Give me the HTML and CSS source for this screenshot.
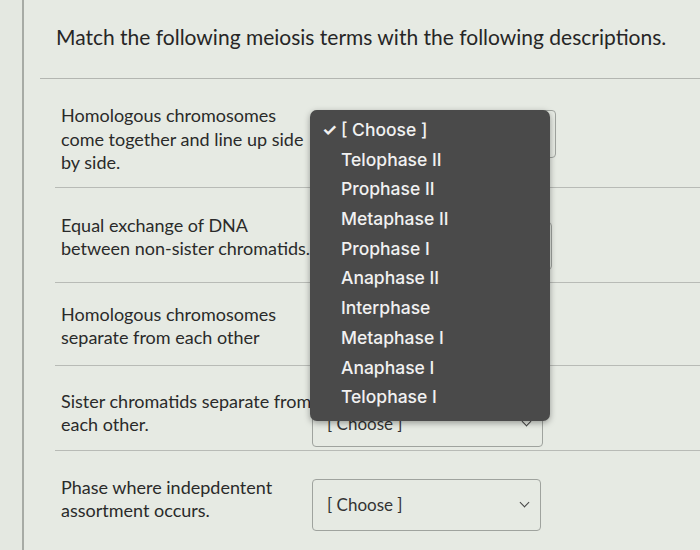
FILE: index.html
```html
<!DOCTYPE html>
<html lang="en">
<head>
<meta charset="utf-8">
<title>Matching question</title>
<link rel="stylesheet" href="styles.css">
</head>
<body>
<div class="card">
  <h1 class="title">Match the following meiosis terms with the following descriptions.</h1>
  <div class="rows">
    <div class="row">
      <div class="desc">Homologous chromosomes<br>come together and line up side<br>by side.</div>
      <div class="select"><span class="sel-text">[ Choose ]</span><span class="chev"></span></div>
    </div>
    <div class="row">
      <div class="desc">Equal exchange of DNA<br>between non-sister chromatids.</div>
      <div class="select"><span class="sel-text">[ Choose ]</span><span class="chev"></span></div>
    </div>
    <div class="row">
      <div class="desc">Homologous chromosomes<br>separate from each other</div>
      <div class="select"><span class="sel-text">[ Choose ]</span><span class="chev"></span></div>
    </div>
    <div class="row">
      <div class="desc">Sister chromatids separate from<br>each other.</div>
      <div class="select"><span class="sel-text">[ Choose ]</span><span class="chev"></span></div>
    </div>
    <div class="row">
      <div class="desc">Phase where indepdentent<br>assortment occurs.</div>
      <div class="select"><span class="sel-text">[ Choose ]</span><span class="chev"></span></div>
    </div>
  </div>
  <ul class="menu">
    <li class="item checked"><span class="check">✓</span>[ Choose ]</li>
    <li class="item">Telophase II</li>
    <li class="item">Prophase II</li>
    <li class="item">Metaphase II</li>
    <li class="item">Prophase I</li>
    <li class="item">Anaphase II</li>
    <li class="item">Interphase</li>
    <li class="item">Metaphase I</li>
    <li class="item">Anaphase I</li>
    <li class="item">Telophase I</li>
  </ul>
</div>
</body>
</html>
```
FILE: styles.css
```css
html, body {
  margin: 0;
  padding: 0;
}
body {
  width: 700px;
  height: 550px;
  overflow: hidden;
  background: #e4e8e1;
  font-family: Lato, "Open Sans", sans-serif;
  color: #2b2b2b;
}
.card {
  position: relative;
  margin-left: 22px;
  height: 550px;
  border-left: 2px solid #a7aba5;
  background: #e6eae3;
}
.title {
  margin: 0 0 0 16px;
  padding: 24px 0 0 16px;
  height: 79px;
  box-sizing: border-box;
  font-size: 21px;
  font-weight: 400;
  line-height: 26px;
  color: #262626;
  border-bottom: 1px solid #b3b6b1;
}
.rows {
  margin-left: 31px;
}
.row {
  display: flex;
  align-items: flex-start;
  padding: 22px 0 14px 6px;
  border-bottom: 1px solid #b8bbb6;
}
.row:nth-child(1) { padding-top: 25px; padding-bottom: 12px; }
.row:nth-child(2) { padding-top: 26px; padding-bottom: 12px; }
.row:nth-child(3) { padding-top: 20px; padding-bottom: 5px; }
.row:nth-child(4) { padding-top: 24px; padding-bottom: 3px; }
.row:nth-child(5) { padding-top: 25px; padding-bottom: 0; border-bottom: none; }
.desc {
  width: 251px;
  font-size: 18px;
  line-height: 23.5px;
  color: #2a2a2a;
  white-space: nowrap;
}
.select {
  margin-top: 6px;
  width: 216px;
  height: 46px;
  border: 1px solid #9fa39e;
  border-radius: 4px;
  display: flex;
  align-items: center;
  justify-content: space-between;
  padding: 0 12px 0 14px;
  font-size: 17px;
  color: #333;
}
.row:nth-child(2) .select { margin-top: 8px; width: 212px; }
.row:nth-child(3) .select { margin-top: 9px; width: 207px; }
.row:nth-child(4) .select { margin-top: 11px; width: 203px; height: 44px; }
.row:nth-child(5) .select { margin-top: 3px; width: 201px; height: 50px; }
.chev {
  width: 6px;
  height: 6px;
  border-right: 1.5px solid #444;
  border-bottom: 1.5px solid #444;
  transform: rotate(45deg);
  margin-top: -4px;
}
.menu {
  position: absolute;
  left: 286px;
  top: 110px;
  width: 240px;
  height: 311px;
  margin: 0;
  padding: 5px 0 0 0;
  box-sizing: border-box;
  list-style: none;
  background: #4a4a4a;
  border-radius: 7px;
  box-shadow: 0 2px 6px rgba(0,0,0,0.35);
  font-family: Inter, Roboto, sans-serif;
  font-weight: 500;
  font-size: 17.5px;
  color: #f1f1f1;
}
.item {
  position: relative;
  height: 29.7px;
  line-height: 30px;
  padding-left: 31px;
}
.check {
  position: absolute;
  left: 12px;
  top: 0;
  font-size: 17px;
  font-weight: 700;
}
```
